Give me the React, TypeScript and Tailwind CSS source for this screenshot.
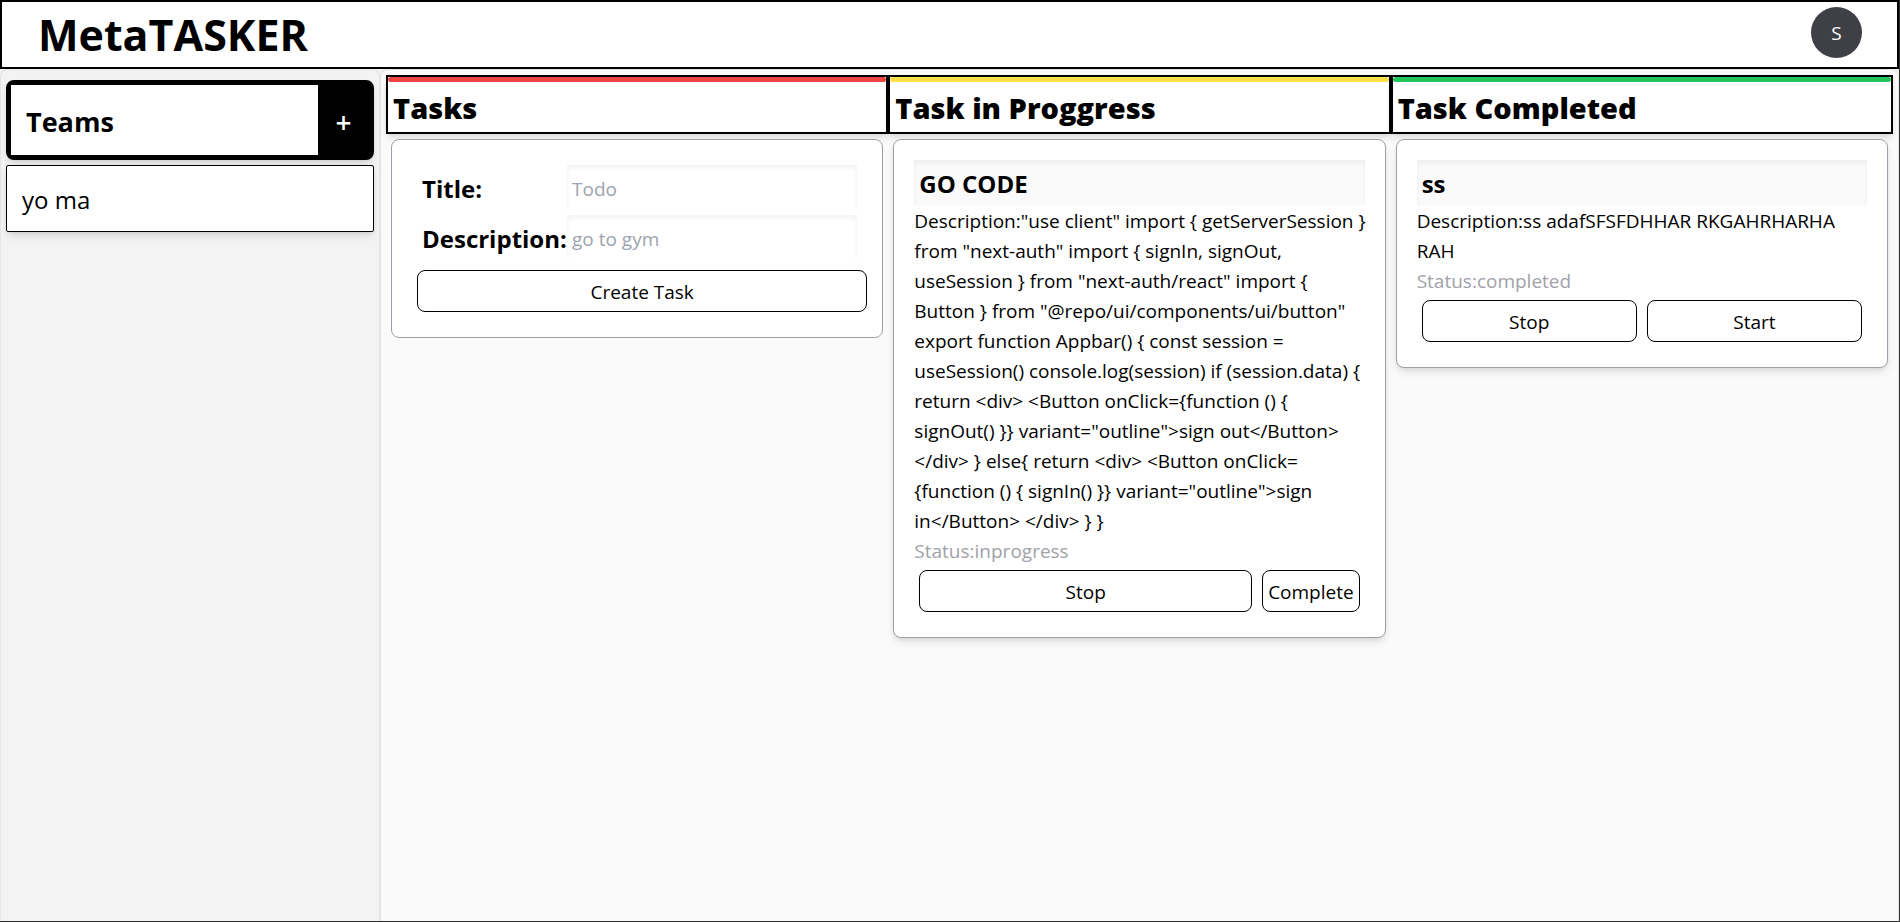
import type { ReactNode } from "react";

const shadow = "shadow-[0_5px_8px_-1px_rgba(0,0,0,0.1),0_2px_5px_-2px_rgba(0,0,0,0.1)]";
const innerShadow = "shadow-[inset_0_3px_5px_rgba(0,0,0,0.05)]";

const code =
  '"use client" import { getServerSession } from "next-auth" import { signIn, signOut, useSession } from "next-auth/react" import { Button } from "@repo/ui/components/ui/button" export function Appbar() { const session = useSession() console.log(session) if (session.data) { return <div> <Button onClick={function () { signOut() }} variant="outline">sign out</Button> </div> } else{ return <div> <Button onClick={function () { signIn() }} variant="outline">sign in</Button> </div> } }';

function ActionButton({ children, grow = true }: { children: ReactNode; grow?: boolean }) {
  return (
    <button
      type="button"
      className={`h-[42px] rounded-lg border border-black bg-white px-[5px] pt-px ${grow ? "flex-1" : "flex-none"}`}
    >
      {children}
    </button>
  );
}

function Column({ title, bar, children }: { title: string; bar: string; children: ReactNode }) {
  return (
    <section className="min-w-0 flex-1">
      <div className={`h-[59px] border-2 border-black bg-white ${shadow}`}>
        <div className={`h-[5px] rounded-full ${bar}`} />
        <h2 className="px-[5px] pt-[6px] text-[29px] leading-10 font-extrabold">{title}</h2>
      </div>
      {children}
    </section>
  );
}

function TaskCard({
  title,
  description,
  status,
  children,
}: {
  title: string;
  description: string;
  status: string;
  children: ReactNode;
}) {
  return (
    <article className={`m-[5px] rounded-lg border border-zinc-400 bg-white p-5 ${shadow}`}>
      <h3 className={`h-[45px] bg-[#fafafa] px-[5px] text-2xl leading-[48px] font-bold ${innerShadow}`}>{title}</h3>
      <div className="-mr-1 pt-px">
        <p>{`Description:${description}`}</p>
        <p className="text-[#a1a1aa]">{`Status:${status}`}</p>
      </div>
      <div className="flex gap-[10px] px-[5px] pt-1 pb-[5px]">{children}</div>
    </article>
  );
}

function Field({ id, label, placeholder }: { id: string; label: string; placeholder: string }) {
  return (
    <div className="flex items-center">
      <label htmlFor={id} className="w-[145px] flex-none pt-0.5 text-2xl font-bold">
        {label}
      </label>
      <input
        id={id}
        placeholder={placeholder}
        className={`h-[45px] min-w-0 flex-1 px-[5px] pt-0.5 outline-none placeholder:text-[#9ca3af] ${innerShadow}`}
      />
    </div>
  );
}

export default function App() {
  return (
    <div className="flex min-h-screen flex-col border-r border-b border-[#2d2d2d] bg-white font-['Open_Sans','Noto_Sans',sans-serif] text-[19px] leading-[30px] text-black">
      <header className="flex h-[69px] items-center justify-between border-2 border-black bg-white pr-[35px] pl-9">
        <h1 className="text-[43px] leading-[50px] font-bold">MetaTASKER</h1>
        <button type="button" className="mb-1 size-[51px] rounded-full bg-[#3f3f46] text-white">
          S
        </button>
      </header>
      <div className="flex flex-1 bg-[#f3f3f3]">
        <aside className="flex w-[380px] flex-none flex-col gap-[5px] rounded-t-lg border border-b-0 border-zinc-200 px-[5px] pt-[10px]">
          <div className={`flex h-20 rounded-lg border-[5px] border-black bg-black ${shadow}`}>
            <h2 className="flex-1 bg-white pl-[15px] text-[27px] leading-[74px] font-bold">Teams</h2>
            <button type="button" aria-label="Add team" className="w-[51px] pt-1 text-[28px] font-semibold text-white">
              +
            </button>
          </div>
          <button
            type="button"
            className={`h-[67px] rounded-xs border border-black bg-white px-[15px] pt-0.5 text-left text-2xl ${shadow}`}
          >
            yo ma
          </button>
        </aside>
        <main className="flex min-w-0 flex-1 rounded-t-lg border border-b-0 border-zinc-200 bg-[#fafafa] p-[5px]">
          <Column title="Tasks" bar="bg-[#ef4444]">
            <form className="m-[5px] flex flex-col gap-[5px] rounded-lg border border-zinc-400 bg-white py-[25px] pr-[15px] pl-[25px]">
              <div className="flex flex-col gap-[5px] pr-[10px] pl-[5px]">
                <Field id="title" label="Title:" placeholder="Todo" />
                <Field id="description" label="Description:" placeholder="go to gym" />
              </div>
              <div className="flex pt-[5px]">
                <ActionButton>Create Task</ActionButton>
              </div>
            </form>
          </Column>
          <Column title="Task in Proggress" bar="bg-[#fde047]">
            <TaskCard title="GO CODE" description={code} status="inprogress">
              <ActionButton>Stop</ActionButton>
              <ActionButton grow={false}>Complete</ActionButton>
            </TaskCard>
          </Column>
          <Column title="Task Completed" bar="bg-[#22c55e]">
            <TaskCard title="ss" description="ss adafSFSFDHHAR RKGAHRHARHA RAH" status="completed">
              <ActionButton>Stop</ActionButton>
              <ActionButton>Start</ActionButton>
            </TaskCard>
          </Column>
        </main>
      </div>
    </div>
  );
}
